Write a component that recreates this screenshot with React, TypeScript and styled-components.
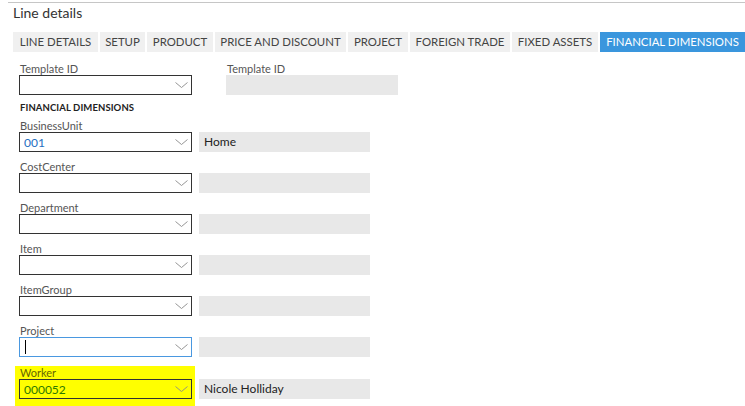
import React from 'react';
import styled, { createGlobalStyle } from 'styled-components';

const GlobalStyle = createGlobalStyle`
  body {
    margin: 0;
    background: #ffffff;
    font-family: Lato, "Liberation Sans", sans-serif;
    color: #333333;
  }
`

const Page = styled.div`
  width: 745px;
  height: 406px;
  overflow: hidden;
`

const Header = styled.div`
  margin: 2px 0 0 8px;
  border-top: 1px solid #c6c6c6;
  padding: 1px 0 0 5px;
  font-size: 14px;
  line-height: 18px;
  color: #333333;
`

const Tabs = styled.div`
  display: flex;
  gap: 2px;
  margin: 10px 0 0 13px;
`

const Tab = styled.div<{ $active?: boolean; $w: number }>`
  flex: none;
  width: ${p => p.$w}px;
  height: 20px;
  line-height: 20px;
  font-size: 11.4px;
  text-align: center;
  white-space: nowrap;
  background: ${p => (p.$active ? '#3a96dd' : '#f0f0f0')};
  color: ${p => (p.$active ? '#ffffff' : '#444444')};
`

const Body = styled.div`
  padding: 10px 0 0 19px;
`

const TopRow = styled.div`
  display: flex;
  gap: 34px;
`

const Field = styled.div`
  display: flex;
  flex-direction: column;
`

const Label = styled.div`
  font-size: 11px;
  line-height: 13px;
  color: #555555;
  padding-left: 1px;
`

const Section = styled.div`
  margin: 7px 0 5px 1px;
  font-size: 9.5px;
  font-weight: 700;
  line-height: 12px;
  color: #222222;
  letter-spacing: 0.1px;
`

const Row = styled.div`
  display: flex;
  gap: 7px;
`

const Combo = styled.div<{ $focus?: boolean; $value?: string }>`
  box-sizing: border-box;
  width: 173px;
  height: 20px;
  border: 1px solid ${p => (p.$focus ? '#4a98e0' : '#333333')};
  display: flex;
  align-items: center;
  padding: 0 3px 0 4px;
  font-size: 12px;
  color: ${p => p.$value || '#1f6fbf'};
  background: transparent;
`

const ComboText = styled.span`
  flex: 1;
`

const Caret = styled.span`
  width: 1px;
  height: 14px;
  background: #000000;
  margin-left: 1px;
`

const Desc = styled.div<{ $width?: number; $offset?: number }>`
  width: ${p => p.$width || 171}px;
  height: 20px;
  margin-top: ${p => p.$offset || 0}px;
  background: #e8e8e8;
  font-size: 12px;
  line-height: 20px;
  padding-left: 5px;
  box-sizing: border-box;
  color: #222222;
`

const Block = styled.div`
  margin-bottom: 8px;
`

const Highlight = styled.div`
  display: inline-flex;
  flex-direction: column;
  background: #ffff00;
  margin: 1px -3px 0 -4px;
  padding: 0 3px 10px 4px;

  ${Label} {
    color: #666600;
  }
`

const Chevron = () => (
  <svg width="13" height="8" viewBox="0 0 13 8">
    <path d="M0.5 1.5 L6.5 6.5 L12.5 1.5" fill="none" stroke="#8a8a8a" strokeWidth="0.9" />
  </svg>
)

const tabs = [
  { t: 'LINE DETAILS', w: 85 },
  { t: 'SETUP', w: 45 },
  { t: 'PRODUCT', w: 66 },
  { t: 'PRICE AND DISCOUNT', w: 131 },
  { t: 'PROJECT', w: 60 },
  { t: 'FOREIGN TRADE', w: 100 },
  { t: 'FIXED ASSETS', w: 86 },
  { t: 'FINANCIAL DIMENSIONS', w: 145 },
]

const dims = [
  { name: 'BusinessUnit', value: '001', desc: 'Home' },
  { name: 'CostCenter' },
  { name: 'Department' },
  { name: 'Item' },
  { name: 'ItemGroup' },
  { name: 'Project', focus: true },
]

function App() {
  return (
    <Page>
      <GlobalStyle />
      <Header>Line details</Header>
      <Tabs>
        {tabs.map(({ t, w }) => (
          <Tab key={t} $w={w} $active={t === 'FINANCIAL DIMENSIONS'}>{t}</Tab>
        ))}
      </Tabs>
      <Body>
        <TopRow>
          <Field>
            <Label>Template ID</Label>
            <Combo>
              <ComboText />
              <Chevron />
            </Combo>
          </Field>
          <Field>
            <Label>Template ID</Label>
            <Desc $width={172} />
          </Field>
        </TopRow>
        <Section>FINANCIAL DIMENSIONS</Section>
        {dims.map(d => (
          <Block key={d.name}>
            <Label>{d.name}</Label>
            <Row>
              <Combo $focus={d.focus}>
                {d.focus && <Caret />}
                <ComboText>{d.value}</ComboText>
                <Chevron />
              </Combo>
              <Desc>{d.desc}</Desc>
            </Row>
          </Block>
        ))}
        <Row>
          <Highlight>
            <Label>Worker</Label>
            <Combo $value="#2d7a00">
              <ComboText>000052</ComboText>
              <Chevron />
            </Combo>
          </Highlight>
          <Desc $offset={14}>Nicole Holliday</Desc>
        </Row>
      </Body>
    </Page>
  );
}

export default App;
